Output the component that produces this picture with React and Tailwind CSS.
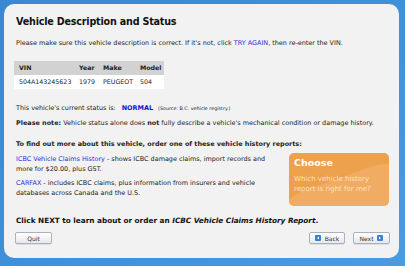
import React from 'react';

function NavIcon({ dir }) {
  return (
    <span className="inline-flex items-center justify-center w-[6px] h-[6px] rounded-[1px] bg-[#3b7fd0]">
      <svg width="4" height="4" viewBox="0 0 4 4">
        {dir === 'left' ? <path d="M3 0.5 L1 2 L3 3.5 Z" fill="#fff" /> : <path d="M1 0.5 L3 2 L1 3.5 Z" fill="#fff" />}
      </svg>
    </span>
  );
}

function Btn({ children, className = '' }) {
  return (
    <button className={`h-[12px] rounded-[2px] border border-[#a9b1bf] bg-gradient-to-b from-white to-[#e6e8ec] text-[6px] text-[#333] flex items-center justify-center gap-[4px] shadow-[0_1px_0_rgba(0,0,0,0.08)] ${className}`}>
      {children}
    </button>
  );
}

export default function App() {
  return (
    <div
      className="w-[405px] h-[266px] bg-gradient-to-br from-[#3a87d4] via-[#3f90db] to-[#4a9be2] pt-[4px] pl-[4px] pr-[6px] pb-[8px] text-[#222]"
      style={{ fontFamily: '"DejaVu Sans", Verdana, sans-serif' }}
    >
      <div className="h-full rounded-[10px] bg-[#f2f2f2] pl-[12px] pr-[10px] pt-[12px] flex flex-col">
        <h1 className="text-[9.6px] leading-[12px] font-bold text-[#111] tracking-[-0.2px]">Vehicle Description and Status</h1>

        <p className="mt-[10px] text-[6.45px] leading-[10px]">
          Please make sure this vehicle description is correct. If it's not, click{' '}
          <span className="text-[#2f2fd6]">TRY AGAIN</span>, then re-enter the VIN.
        </p>

        <table className="mt-[13px] -ml-[2px] w-[150px] table-fixed border-collapse text-[6.3px]">
          <thead>
            <tr className="bg-[#d2d2d2] h-[14px]">
              <th className="text-left font-bold pl-[5px] w-[65px]">VIN</th>
              <th className="text-left font-bold w-[24px]">Year</th>
              <th className="text-left font-bold w-[37px]">Make</th>
              <th className="text-left font-bold w-[24px]">Model</th>
            </tr>
          </thead>
          <tbody>
            <tr className="bg-white h-[14px]">
              <td className="pl-[5px]">504A143245623</td>
              <td>1979</td>
              <td>PEUGEOT</td>
              <td>504</td>
            </tr>
          </tbody>
        </table>

        <p className="mt-[14px] text-[6.45px] leading-[10px] flex items-baseline">
          <span>This vehicle's current status is:</span>
          <span className="ml-[6px] font-bold text-[#1010d0]">NORMAL</span>
          <span className="ml-[5px] text-[4.8px]">(Source: B.C. vehicle registry.)</span>
        </p>

        <p className="mt-[4px] text-[6.45px] leading-[10px]">
          <span className="font-bold">Please note:</span> Vehicle status alone does <span className="font-bold">not</span> fully describe a vehicle's mechanical condition or damage history.
        </p>

        <p className="mt-[11px] text-[6.45px] leading-[10px] font-bold">
          To find out more about this vehicle, order one of these vehicle history reports:
        </p>

        <div className="flex mt-[5px]">
          <div className="w-[262px] text-[6.45px] leading-[10px]">
            <p>
              <span className="text-[#2f2fd6]">ICBC Vehicle Claims History</span> - shows ICBC damage claims, import records and more for $20.00, plus GST.
            </p>
            <p className="mt-[4px]">
              <span className="text-[#2f2fd6]">CARFAX</span> - includes ICBC claims, plus information from insurers and vehicle databases across Canada and the U.S.
            </p>
          </div>
          <div className="ml-[11px] mt-[-1px] w-[100px] h-[53px] rounded-[5px] bg-[#eda14d] relative overflow-hidden pl-[5px] pt-[4px]">
            <div className="absolute right-[-50px] bottom-[-70px] w-[170px] h-[100px] rounded-full bg-[#f3b877] opacity-50 rotate-[-20deg]" />
            <div className="relative text-[9.5px] leading-[12px] font-bold text-white">Choose</div>
            <div className="relative mt-[5px] text-[7px] leading-[10px] text-[#fde2bf]">Which vehicle history<br />report is right for me?</div>
          </div>
        </div>

        <p className="mt-[10px] text-[7.3px] leading-[10px] font-bold text-[#111]">
          Click NEXT to learn about or order an <span className="italic">ICBC Vehicle Claims History Report</span>.
        </p>

        <div className="mt-[6px] flex items-center">
          <Btn className="w-[37px] -ml-[1px]">Quit</Btn>
          <div className="ml-auto flex gap-[8px] mr-[-1px]">
            <Btn className="w-[36px]"><NavIcon dir="left" />Back</Btn>
            <Btn className="w-[37px]">Next<NavIcon dir="right" /></Btn>
          </div>
        </div>
      </div>
    </div>
  );
}
